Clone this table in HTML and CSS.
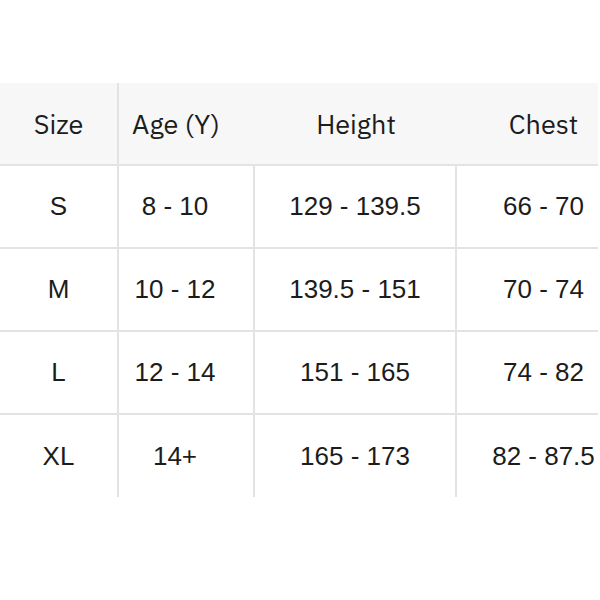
FILE: index.html
```html
<!DOCTYPE html>
<html>
<head>
<meta charset="utf-8">
<link rel="stylesheet" href="styles.css">
</head>
<body>
<div class="wrap">
  <div class="table">
    <div class="row head">
      <div class="cell c1">Size</div>
      <div class="cell c2">Age (Y)</div>
      <div class="cell c3">Height</div>
      <div class="cell c4">Chest</div>
    </div>
    <div class="row body">
      <div class="cell c1">S</div>
      <div class="cell c2">8 - 10</div>
      <div class="cell c3">129 - 139.5</div>
      <div class="cell c4">66 - 70</div>
    </div>
    <div class="row body">
      <div class="cell c1">M</div>
      <div class="cell c2">10 - 12</div>
      <div class="cell c3">139.5 - 151</div>
      <div class="cell c4">70 - 74</div>
    </div>
    <div class="row body">
      <div class="cell c1">L</div>
      <div class="cell c2">12 - 14</div>
      <div class="cell c3">151 - 165</div>
      <div class="cell c4">74 - 82</div>
    </div>
    <div class="row body last">
      <div class="cell c1">XL</div>
      <div class="cell c2">14+</div>
      <div class="cell c3">165 - 173</div>
      <div class="cell c4">82 - 87.5</div>
    </div>
  </div>
</div>
</body>
</html>
```
FILE: styles.css
```css
html, body {
  margin: 0;
  padding: 0;
  background: #ffffff;
}
.wrap {
  width: 598px;
  overflow: hidden;
  padding-top: 83px;
}
.table {
  width: 630px;
  display: flex;
  flex-direction: column;
}
.row {
  display: grid;
  grid-template-columns: 119px 136px 202px 173px;
  height: 83px;
  border-bottom: 2px solid #e3e3e3;
  box-sizing: border-box;
}
.row.last {
  border-bottom: none;
  height: 82px;
}
.head {
  background: #f7f7f7;
  font-family: "IBM Plex Sans", "Noto Sans", "Liberation Sans", sans-serif;
  font-size: 27px;
  color: #1c1c1c;
}
.body {
  font-family: "Liberation Sans", Arial, sans-serif;
  font-size: 26px;
  color: #1c1c1c;
}
.cell {
  display: flex;
  align-items: center;
  justify-content: center;
  box-sizing: border-box;
}
.c1 {
  border-right: 2px solid #e3e3e3;
}
.c2 {
  padding-right: 22px;
}
.body .c2, .body .c3 {
  border-right: 2px solid #e3e3e3;
}
```
